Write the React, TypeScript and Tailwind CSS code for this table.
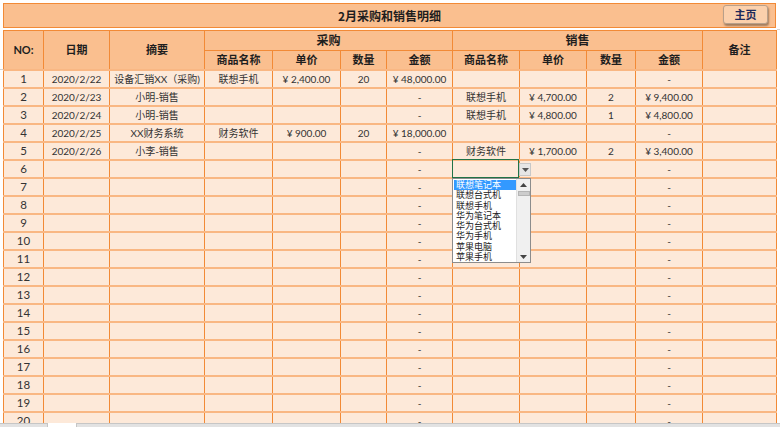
import React from "react";

const colW = [
  "w-[40px]", "w-[66px]", "w-[95px]", "w-[68px]", "w-[68px]", "w-[46px]",
  "w-[66px]", "w-[67px]", "w-[67px]", "w-[49px]", "w-[67px]", "w-[74px]",
];

type Row = string[];
const data: Row[] = [
  ["1", "2020/2/22", "设备汇销XX（采购)", "联想手机", "¥ 2,400.00", "20", "¥ 48,000.00", "", "", "", "-", ""],
  ["2", "2020/2/23", "小明-销售", "", "", "", "-", "联想手机", "¥ 4,700.00", "2", "¥ 9,400.00", ""],
  ["3", "2020/2/24", "小明-销售", "", "", "", "-", "联想手机", "¥ 4,800.00", "1", "¥ 4,800.00", ""],
  ["4", "2020/2/25", "XX财务系统", "财务软件", "¥ 900.00", "20", "¥ 18,000.00", "", "", "", "-", ""],
  ["5", "2020/2/26", "小李-销售", "", "", "", "-", "财务软件", "¥ 1,700.00", "2", "¥ 3,400.00", ""],
];
for (let i = 6; i <= 20; i++) {
  data.push([String(i), "", "", "", "", "", "-", "", "", "", "-", ""]);
}

const items = ["联想笔记本", "联想台式机", "联想手机", "华为笔记本", "华为台式机", "华为手机", "苹果电脑", "苹果手机"];

const th = "border border-[#f28a36] bg-[#fabf8f] font-bold text-[#1e1e1e] text-[11px] text-center align-middle p-0";

export default function App() {
  return (
    <div className="relative w-[780px] h-[427px] overflow-hidden bg-white font-['Lato','Noto_Sans_CJK_SC',sans-serif] text-[#2b2b2b]">
      {/* gridline traces outside table */}
      <div className="absolute left-[777px] top-[29px] w-[3px] h-px bg-[#d4d4d4]" />
      <div className="absolute left-0 top-[69px] w-[3px] h-px bg-[#d4d4d4]" />
      <div className="pt-[3px] pl-[3px]">
        <div className="w-[773px] h-[25px] border border-[#f28a36] bg-[#fabf8f] flex items-center justify-center relative">
          <span className="font-bold text-[12px] text-[#1e1e1e] font-['Noto_Sans_CJK_SC',sans-serif]">2月采购和销售明细</span>
          <button className="absolute left-[719px] top-[1px] w-[45px] h-[19px] rounded-[3px] bg-[#fbd0ac] border border-[#b9a08a] shadow-[1px_2px_2px_rgba(0,0,0,0.35)] text-[11px] font-bold text-[#1f2a5a] flex items-center justify-center font-['Noto_Sans_CJK_SC',sans-serif]">
            主页
          </button>
        </div>
        <table className="mt-[2px] table-fixed border-collapse w-[773px]">
          <colgroup>
            {colW.map((c, i) => (
              <col key={i} className={c} />
            ))}
          </colgroup>
          <thead>
            <tr className="h-[20px]">
              <th rowSpan={2} className={th}>NO:</th>
              <th rowSpan={2} className={th}>日期</th>
              <th rowSpan={2} className={th}>摘要</th>
              <th colSpan={4} className={th + " text-[12px]"}>采购</th>
              <th colSpan={4} className={th + " text-[12px]"}>销售</th>
              <th rowSpan={2} className={th}>备注</th>
            </tr>
            <tr className="h-[19px]">
              <th className={th}>商品名称</th>
              <th className={th}>单价</th>
              <th className={th}>数量</th>
              <th className={th}>金额</th>
              <th className={th}>商品名称</th>
              <th className={th}>单价</th>
              <th className={th}>数量</th>
              <th className={th}>金额</th>
            </tr>
          </thead>
          <tbody>
            {data.map((r, ri) => (
              <tr key={ri} className="h-[18px] bg-[#fde9d9]">
                {r.map((v, ci) => (
                  <td
                    key={ci}
                    className={
                      "border-x border-x-[#f28a36] border-y-2 border-y-[#f9b783] text-center align-middle p-0 leading-[14px] whitespace-nowrap text-[#333] " +
                      (ci === 0 ? "text-[11.5px] " : "text-[10px] ")
                    }
                  >
                    {v}
                  </td>
                ))}
              </tr>
            ))}
          </tbody>
        </table>
      </div>

      {/* active cell + dropdown */}
      <div className="absolute left-[452px] top-[159px] w-[67px] h-[19px] border border-[#217346]" />
      <div className="absolute left-[519px] top-[163px] w-[12px] h-[13px] bg-[#e6e6e6] border border-[#c8c8c8] flex items-center justify-center">
        <svg width="7" height="4" viewBox="0 0 7 4"><path d="M0 0h7L3.5 4z" fill="#555" /></svg>
      </div>
      <div className="absolute left-[452px] top-[178px] w-[79px] h-[85px] bg-white border border-[#8c8c8c] flex">
        <div className="flex-1 pt-[1px] pl-[1px] font-['Noto_Sans_CJK_SC',sans-serif]">
          {items.map((it, i) => (
            <div
              key={i}
              className={
                "h-[10.3px] text-[9px] leading-[10.3px] pl-[2px] whitespace-nowrap " +
                (i === 0 ? "bg-[#3399ff] text-white" : "text-[#222]")
              }
            >
              {it}
            </div>
          ))}
        </div>
        <div className="w-[14px] bg-[#f0f0f0] border-l border-[#e0e0e0] flex flex-col items-center">
          <div className="h-[11px] flex items-center justify-center">
            <svg width="7" height="4" viewBox="0 0 7 4"><path d="M0 4h7L3.5 0z" fill="#444" /></svg>
          </div>
          <div className="w-[12px] h-[5px] bg-[#cdcdcd] border border-[#b5b5b5] mt-[1px]" />
          <div className="flex-1" />
          <div className="h-[11px] flex items-center justify-center">
            <svg width="7" height="4" viewBox="0 0 7 4"><path d="M0 0h7L3.5 4z" fill="#444" /></svg>
          </div>
        </div>
      </div>

      {/* sheet tab bar */}
      <div className="absolute left-0 top-[423px] w-[780px] h-[4px] bg-[#e2e2e2] border-t border-[#c6c6c6]">
        <div className="absolute left-[47px] -top-px w-[30px] h-[5px] bg-white border-x border-[#c6c6c6]" />
      </div>
    </div>
  );
}
